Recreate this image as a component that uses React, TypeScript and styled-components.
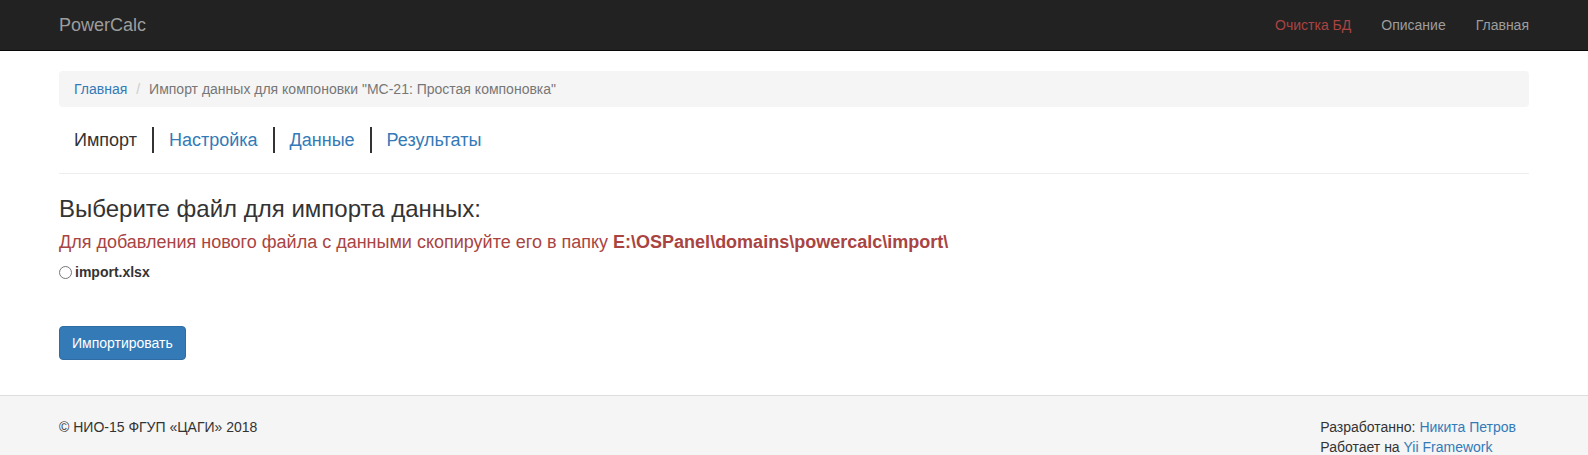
import styled, { createGlobalStyle } from "styled-components";

const GlobalStyle = createGlobalStyle`
  * { box-sizing: border-box; }
  html, body {
    margin: 0;
    padding: 0;
    background: #fff;
  }
  body {
    font-family: "Liberation Sans", Arial, Helvetica, sans-serif;
    font-size: 14px;
    line-height: 1.42857143;
    color: #333;
  }
  a { color: #337ab7; text-decoration: none; }
`;

const Container = styled.div<{ $align?: string }>`
  width: 1500px;
  margin-left: 44px;
  padding: 0 15px;
  display: flex;
  align-items: ${(p) => p.$align || "stretch"};
`;

const Navbar = styled.nav`
  background-color: #222;
  border-bottom: 1px solid #080808;
  height: 51px;
`;

const NavInner = styled(Container)`
  justify-content: space-between;
  height: 50px;
`;

const Brand = styled.a`
  font-size: 18px;
  line-height: 20px;
  padding: 15px 0;
  color: #9d9d9d;
`;

const NavList = styled.ul`
  display: flex;
  list-style: none;
  margin: 0 -15px 0 0;
  padding: 0;
`;

const NavLink = styled.a<{ $danger?: boolean }>`
  display: block;
  padding: 15px;
  line-height: 20px;
  color: ${(p) => (p.$danger ? "#a94442" : "#9d9d9d")};
`;

const Wrap = styled.div`
  padding-top: 20px;
`;

const Main = styled(Container)`
  flex-direction: column;
`;

const Breadcrumb = styled.ol`
  display: flex;
  list-style: none;
  margin: 0 0 20px;
  padding: 8px 15px;
  background-color: #f5f5f5;
  border-radius: 4px;
  li + li {
    margin-left: 4px;
  }
  li + li::before {
    content: "/\\00a0";
    padding: 0 5px;
    color: #ccc;
  }
`;

const Crumb = styled.li<{ $active?: boolean }>`
  color: ${(p) => (p.$active ? "#777" : "#337ab7")};
`;

const Tabs = styled.ul`
  display: flex;
  list-style: none;
  margin: 0;
  padding: 0;
`;

const Tab = styled.li<{ $active?: boolean }>`
  font-size: 18px;
  line-height: 26px;
  padding: 0 15px;
  color: ${(p) => (p.$active ? "#333" : "#337ab7")};
  & + & {
    border-left: 2px solid #333;
  }
`;

const Rule = styled.hr`
  margin: 20px 0 0;
  border: 0;
  border-top: 1px solid #eee;
  height: 0;
`;

const Heading = styled.h3`
  font-size: 24px;
  font-weight: 500;
  line-height: 1.1;
  margin: 22px 0 11px;
`;

const Notice = styled.h4`
  font-size: 18px;
  font-weight: 500;
  line-height: 1.1;
  margin: 0 0 9px;
  color: #a94442;
  b { font-weight: 700; }
`;

const RadioLabel = styled.label`
  display: flex;
  align-items: center;
  min-height: 20px;
  line-height: 20px;
  font-weight: 700;
  margin: 0 0 44px;
  input {
    width: 13px;
    height: 13px;
    margin: 0 3px 0 0;
  }
`;

const Button = styled.button`
  align-self: flex-start;
  font-family: inherit;
  font-size: 14px;
  line-height: 20px;
  padding: 6px 12px;
  color: #fff;
  background-color: #337ab7;
  border: 1px solid #2e6da4;
  border-radius: 4px;
  margin-bottom: 35px;
`;

const Footer = styled.footer`
  height: 66px;
  background-color: #f5f5f5;
  border-top: 1px solid #ddd;
  padding-top: 21px;
`;

const FooterInner = styled(Container)`
  justify-content: space-between;
`;

const Credits = styled.div`
  padding-right: 13px;
`;

export default function App() {
  return (
    <>
      <GlobalStyle />
      <Navbar>
        <NavInner $align="center">
          <Brand href="#">PowerCalc</Brand>
          <NavList>
            <li><NavLink $danger href="#">Очистка БД</NavLink></li>
            <li><NavLink href="#">Описание</NavLink></li>
            <li><NavLink href="#">Главная</NavLink></li>
          </NavList>
        </NavInner>
      </Navbar>
      <Wrap>
        <Main>
          <Breadcrumb>
            <Crumb>Главная</Crumb>
            <Crumb $active>Импорт данных для компоновки "МС-21: Простая компоновка"</Crumb>
          </Breadcrumb>
          <Tabs>
            <Tab $active>Импорт</Tab>
            <Tab>Настройка</Tab>
            <Tab>Данные</Tab>
            <Tab>Результаты</Tab>
          </Tabs>
          <Rule />
          <Heading>Выберите файл для импорта данных:</Heading>
          <Notice>
            Для добавления нового файла с данными скопируйте его в папку{" "}
            <b>E:\OSPanel\domains\powercalc\import\</b>
          </Notice>
          <RadioLabel>
            <input type="radio" name="file" value="import.xlsx" />
            import.xlsx
          </RadioLabel>
          <Button type="button">Импортировать</Button>
        </Main>
      </Wrap>
      <Footer>
        <FooterInner>
          <div>© НИО-15 ФГУП «ЦАГИ» 2018</div>
          <Credits>
            <div>Разработанно: <a href="#">Никита Петров</a></div>
            <div>Работает на <a href="#">Yii Framework</a></div>
          </Credits>
        </FooterInner>
      </Footer>
    </>
  );
}
